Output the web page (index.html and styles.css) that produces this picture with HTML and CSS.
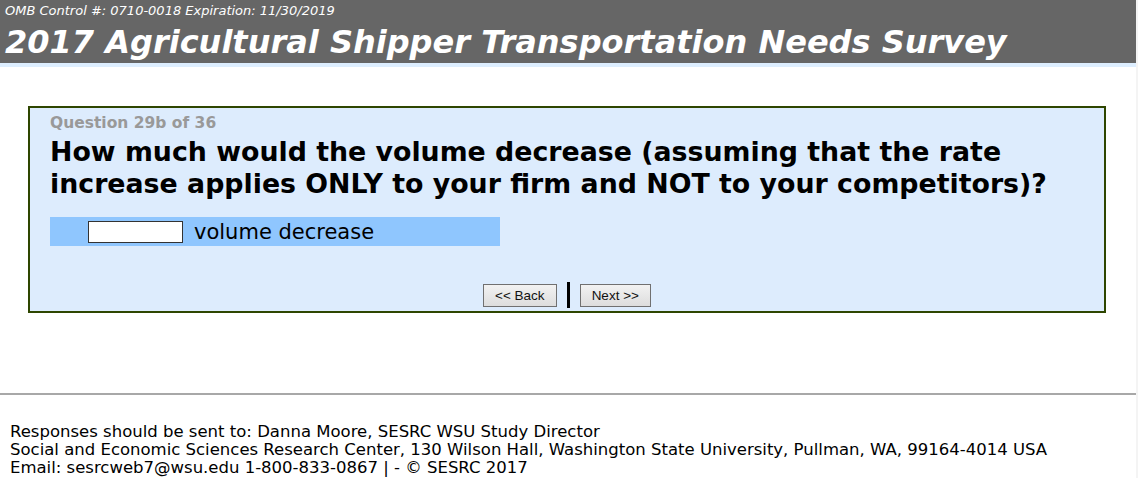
FILE: index.html
```html
<!DOCTYPE html>
<html lang="en">
<head>
    <meta charset="UTF-8">
    <title>2017 Agricultural Shipper Transportation Needs Survey</title>
    <link rel="stylesheet" href="styles.css">
</head>
<body>
    <div class="page">
        <div class="header">
            <div class="omb">OMB Control #: 0710-0018 Expiration: 11/30/2019</div>
            <h1>2017 Agricultural Shipper Transportation Needs Survey</h1>
        </div>
        <div class="header-strip"></div>

        <div class="question-box">
            <div class="question-num">Question 29b of 36</div>
            <div class="question-text">How much would the volume decrease (assuming that the rate increase applies ONLY to your firm and NOT to your competitors)?</div>
            <div class="answer-row">
                <input type="text" class="answer-input">
                <span class="answer-label">volume decrease</span>
            </div>
            <div class="nav">
                <button class="nav-btn">&lt;&lt; Back</button>
                <span class="nav-sep"></span>
                <button class="nav-btn">Next &gt;&gt;</button>
            </div>
        </div>

        <div class="footer">
            <div>Responses should be sent to: Danna Moore, SESRC WSU Study Director</div>
            <div>Social and Economic Sciences Research Center, 130 Wilson Hall, Washington State University, Pullman, WA, 99164-4014 USA</div>
            <div>Email: sesrcweb7@wsu.edu 1-800-833-0867 | - &copy; SESRC 2017</div>
        </div>
    </div>
</body>
</html>
```
FILE: styles.css
```css
body {
    margin: 0;
    background-color: #f4f4f4;
    font-family: Verdana, "DejaVu Sans", sans-serif;
}

.page {
    width: 1136px;
    background: #ffffff;
    min-height: 478px;
}

.header {
    background-color: #666666;
    color: #ffffff;
    height: 63px;
    padding-left: 5px;
}

.omb {
    font-size: 13px;
    font-style: italic;
    padding-top: 3px;
    line-height: 15px;
}

h1 {
    margin: 0;
    padding-top: 4px;
    font-size: 32px;
    font-style: italic;
    font-weight: bold;
    line-height: 40px;
}

.header-strip {
    height: 4px;
    background-color: #ddeeff;
}

.question-box {
    margin: 39px 30px 0 28px;
    border: 2px solid #2e4600;
    background-color: #ddecfd;
    padding: 5px 20px 5px 20px;
    height: 193px;
}

.question-num {
    color: #999999;
    font-weight: bold;
    font-size: 15.5px;
    line-height: 20px;
}

.question-text {
    font-weight: bold;
    font-size: 26.8px;
    line-height: 32px;
    margin-top: 3px;
}

.answer-row {
    margin-top: 17px;
    width: 450px;
    height: 29px;
    background-color: #8fc6fe;
    display: flex;
    align-items: center;
    padding-left: 38px;
    box-sizing: border-box;
}

.answer-input {
    width: 95px;
    height: 22px;
    box-sizing: border-box;
    border: 1px solid #333333;
    margin: 0;
    padding: 0;
}

.answer-label {
    font-size: 21px;
    margin-left: 11px;
}

.nav {
    display: flex;
    justify-content: center;
    align-items: center;
    gap: 10px;
    margin-top: 36px;
}

.nav-btn {
    font-family: "Liberation Sans", Arial, sans-serif;
    font-size: 13.5px;
    height: 23px;
    padding: 0 11px;
    border: 1px solid #707070;
    background: linear-gradient(#f2f2f2, #dddddd);
    color: #111;
}

.nav-sep {
    width: 3px;
    height: 26px;
    background-color: #000000;
}

.footer {
    margin-top: 80px;
    border-top: 2px solid #a8a8a8;
    padding: 28px 10px 0 10px;
    font-size: 16.5px;
    line-height: 18px;
}
```
